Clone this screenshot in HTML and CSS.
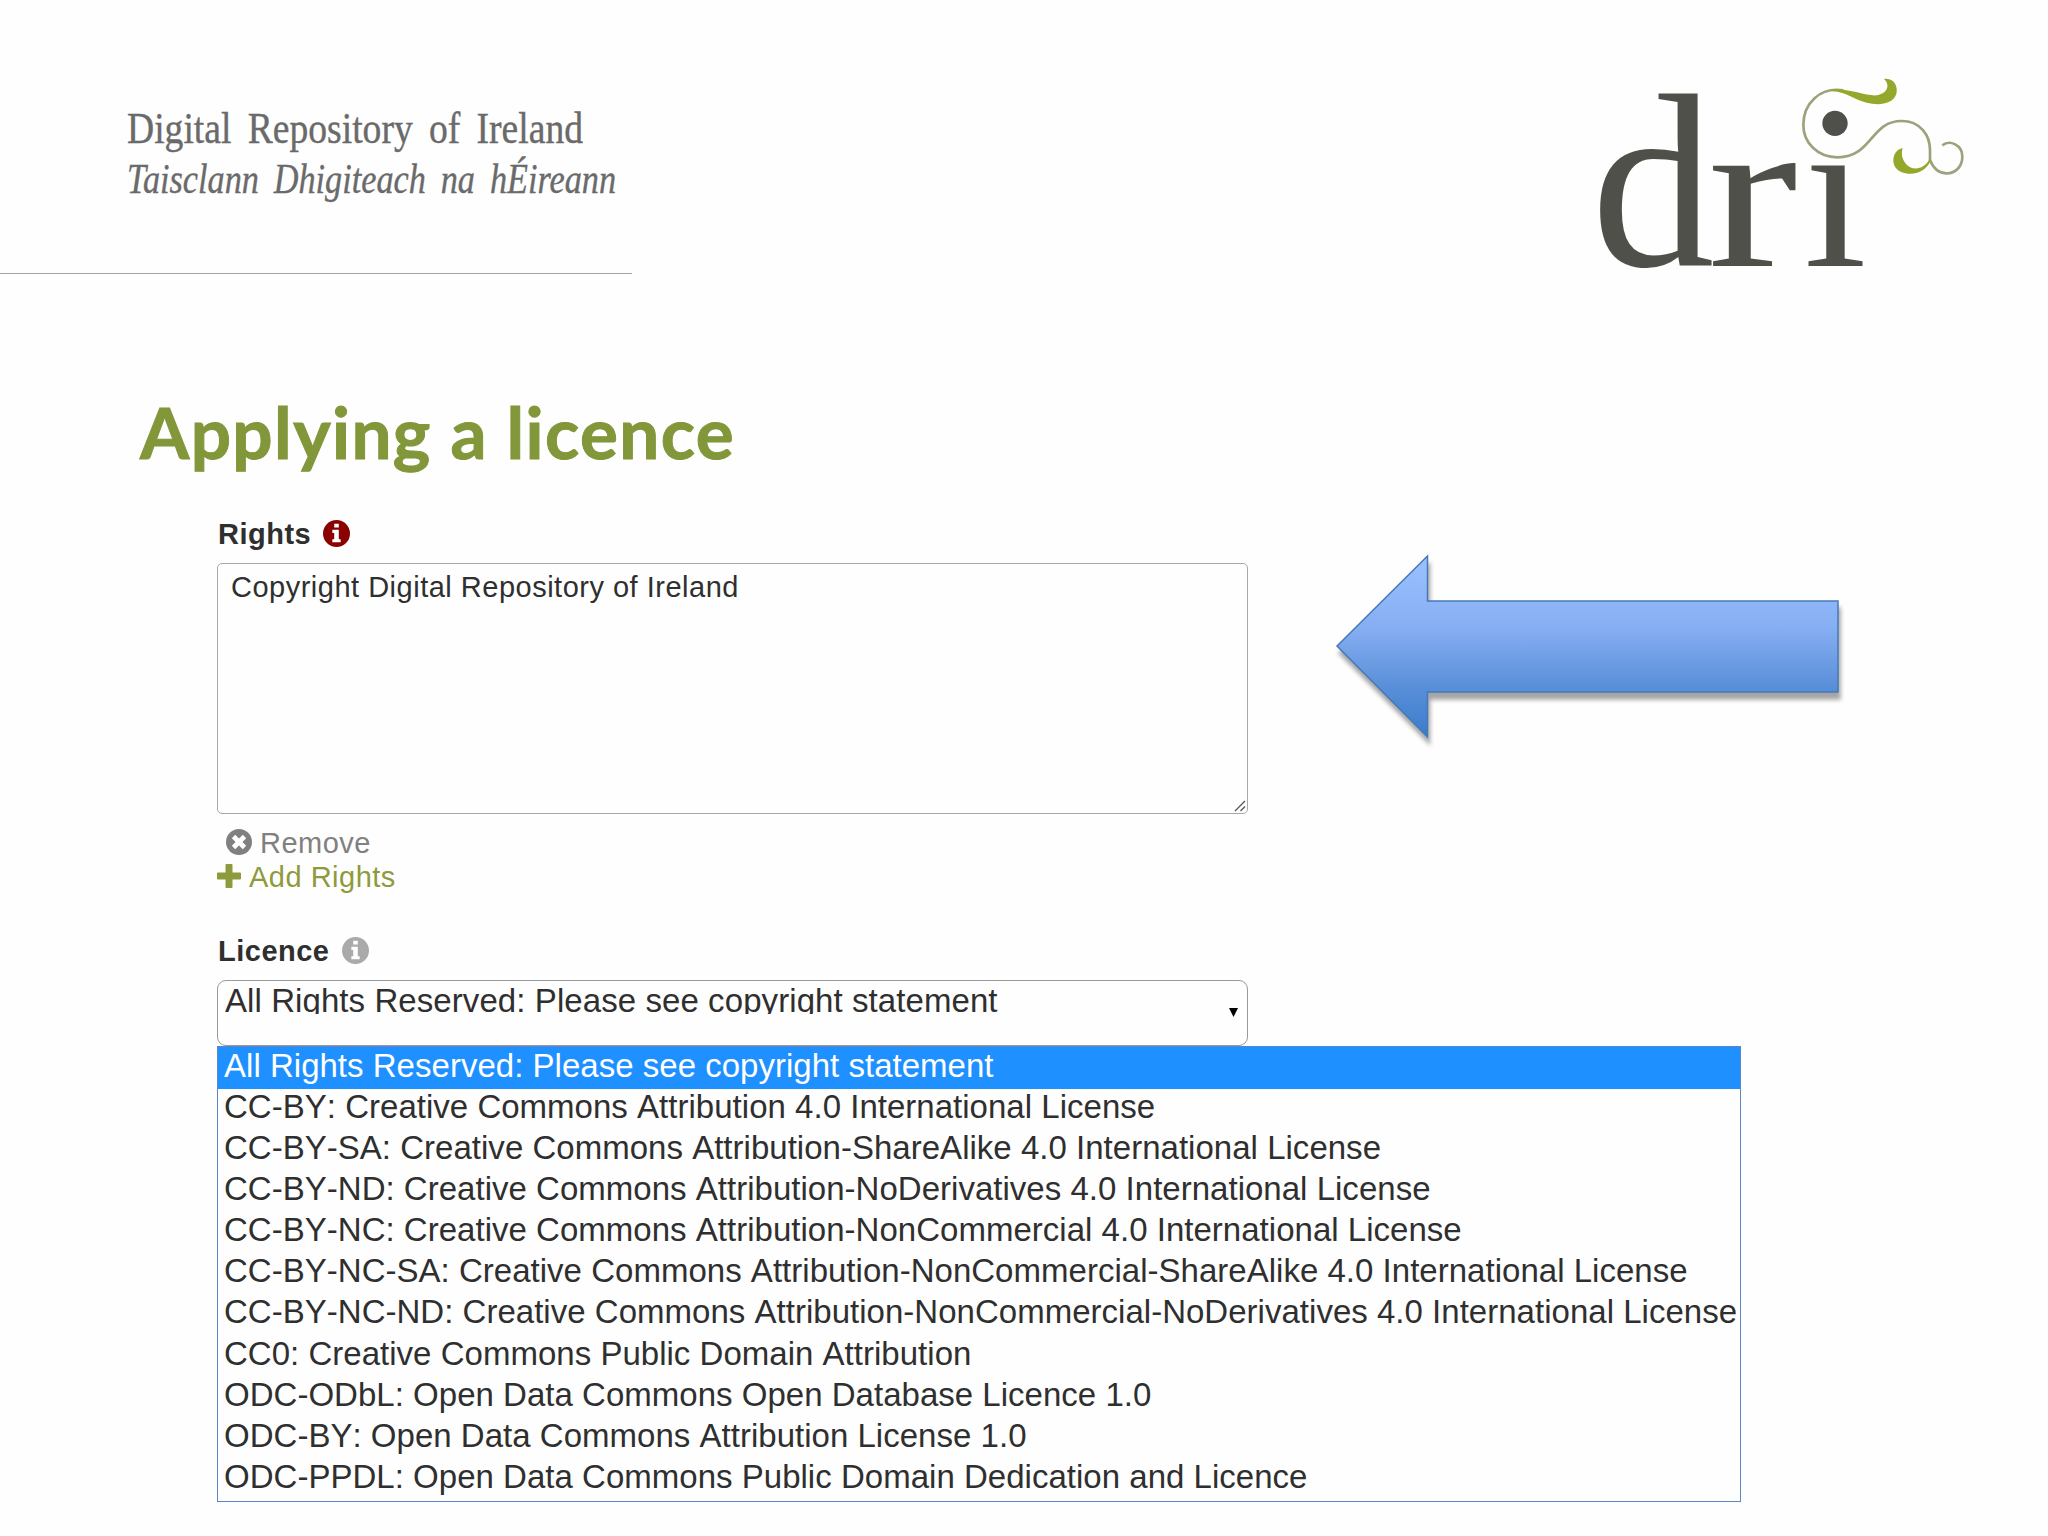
FILE: index.html
```html
<!DOCTYPE html>
<html lang="en">

<head>
    <meta charset="UTF-8">
    <meta name="viewport" content="width=device-width, initial-scale=1.0">
    <title>Applying a licence</title>
    <link rel="stylesheet" href="styles.css">
</head>

<body>
    <header class="header">
        <div class="brand">
            <svg class="brand-name" width="504" height="120" viewBox="0 0 504 120">
                <text x="0" y="47" textLength="456" lengthAdjust="spacingAndGlyphs">Digital Repository of Ireland</text>
                <text class="irish" x="0" y="97" textLength="489" lengthAdjust="spacingAndGlyphs">Taisclann Dhigiteach na hÉireann</text>
            </svg>
        </div>
        <svg class="logo" width="400" height="230" viewBox="0 0 1200 690">
            <g class="logo-text">
                <text transform="translate(34 618) scale(1.13 1.14)">d</text>
                <text transform="translate(383 618) scale(1.24 1)">r</text>
                <text transform="translate(671 618) scale(1.04 1)">ı</text>
            </g>
            <circle cx="765" cy="190" r="38" fill="#50504a" />
            <path class="vine" d="M790 91C720 80 670 130 670 195C670 250 715 292 772 292C880 290 870 183 965 183C1020 183 1050 225 1050 270V300C1060 325 1078 340 1100 340C1128 340 1147 318 1147 290C1147 255 1110 238 1087 256" />
            <path class="leaf" d="M755 88C815 85 865 112 895 105C925 98 930 72 912 57C942 52 955 80 949 102C938 134 895 137 860 128C820 118 805 98 755 93Z" />
            <path class="leaf" d="M1050 295C1030 335 992 330 978 312C966 297 963 282 968 264C943 268 933 300 945 320C962 348 1030 355 1053 300Z" />
        </svg>
    </header>

    <main class="content">
        <h1 class="title">Applying a licence</h1>

        <div class="columns">
            <form class="form">
                <div class="label">
                    <b>Rights</b>
                    <svg class="icon" width="27" height="27" viewBox="0 0 26 26">
                        <circle cx="13" cy="13" r="13" fill="#8b0000" />
                        <path fill="#fff" d="M10.8 3.5h4.4v3.8h-4.4zM9 9.5h6.2v9H17v3H9v-3h1.8v-6H9z" />
                    </svg>
                </div>
                <div class="textarea">
                    <span>Copyright Digital Repository of Ireland</span>
                    <svg class="grip" width="12" height="12" viewBox="0 0 12 12">
                        <path d="M1 11L11 1M6.5 11L11 6.5" stroke="#555" stroke-width="1.3" />
                    </svg>
                </div>
                <div class="action remove">
                    <svg width="26" height="26" viewBox="0 0 26 26">
                        <circle cx="13" cy="13" r="13" fill="#808080" />
                        <path d="M7.500 7.500l11 11M18.500 7.500l-11 11" stroke="#fff" stroke-width="4.8" />
                    </svg>
                    <span>Remove</span>
                </div>
                <div class="action add">
                    <svg width="24" height="24" viewBox="0 0 24 24">
                        <path fill="#8e9a3c" d="M8.500 1q0-1 1-1h5q1 0 1 1v7.500H23q1 0 1 1v5q0 1-1 1h-7.500V23q0 1-1 1h-5q-1 0-1-1v-7.500H1q-1 0-1-1v-5q0-1 1-1h7.500z" />
                    </svg>
                    <span>Add Rights</span>
                </div>
                <div class="label licence">
                    <b>Licence</b>
                    <svg class="icon" width="27" height="27" viewBox="0 0 26 26">
                        <circle cx="13" cy="13" r="13" fill="#aaa" />
                        <path fill="#fff" d="M10.8 3.5h4.4v3.8h-4.4zM9 9.5h6.2v9H17v3H9v-3h1.8v-6H9z" />
                    </svg>
                </div>
                <div class="select">
                    <div class="value">All Rights Reserved: Please see copyright statement</div>
                    <svg class="caret" width="9" height="9" viewBox="0 0 9 9">
                        <path d="M0 0h9L4.5 9z" />
                    </svg>
                </div>
                <ul class="options">
                    <li class="selected">All Rights Reserved: Please see copyright statement</li>
                    <li>CC-BY: Creative Commons Attribution 4.0 International License</li>
                    <li>CC-BY-SA: Creative Commons Attribution-ShareAlike 4.0 International License</li>
                    <li>CC-BY-ND: Creative Commons Attribution-NoDerivatives 4.0 International License</li>
                    <li>CC-BY-NC: Creative Commons Attribution-NonCommercial 4.0 International License</li>
                    <li>CC-BY-NC-SA: Creative Commons Attribution-NonCommercial-ShareAlike 4.0 International License</li>
                    <li>CC-BY-NC-ND: Creative Commons Attribution-NonCommercial-NoDerivatives 4.0 International License</li>
                    <li>CC0: Creative Commons Public Domain Attribution</li>
                    <li>ODC-ODbL: Open Data Commons Open Database Licence 1.0</li>
                    <li>ODC-BY: Open Data Commons Attribution License 1.0</li>
                    <li>ODC-PPDL: Open Data Commons Public Domain Dedication and Licence</li>
                </ul>
            </form>

            <svg class="arrow" width="520" height="200" viewBox="0 0 520 200">
                <defs>
                    <linearGradient id="blue" x1="0" y1="0" x2="0" y2="1">
                        <stop offset="0" stop-color="#9bc1ff" />
                        <stop offset="0.4" stop-color="#86aef2" />
                        <stop offset="0.72" stop-color="#5a8fd9" />
                        <stop offset="1" stop-color="#3a7ccb" />
                    </linearGradient>
                </defs>
                <path d="M7 96L97.5 6V51H508V142H97.5V187Z" fill="url(#blue)" stroke="#4579b8" stroke-width="1.5" />
            </svg>
        </div>
    </main>
</body>

</html>
```
FILE: styles.css
```css
* {
    box-sizing: border-box;
}

body {
    margin: 0;
    width: 2048px;
    height: 1536px;
    overflow: hidden;
    background: #fefefe;
    font-family: "Liberation Sans", Arial, sans-serif;
    color: #2f2f2f;
}

svg {
    overflow: visible;
}

.header {
    display: flex;
    justify-content: space-between;
    height: 290px;
    padding-right: 68px;
}

.brand {
    width: 632px;
    height: 274px;
    padding: 96px 0 0 127px;
    border-bottom: 1px solid #a3a3a3;
}

.brand-name {
    display: block;
    font-family: "Liberation Serif", serif;
    font-size: 44px;
    word-spacing: 8px;
    fill: #6a6a6a;
    stroke: #6a6a6a;
    stroke-width: 0.4px;
}

.irish {
    font-size: 43px;
    font-style: italic;
}

.logo {
    margin-top: 60px;
}

.logo-text {
    font-family: "Liberation Serif", serif;
    font-size: 655px;
    fill: #50504a;
}

.vine {
    fill: none;
    stroke: #9aa37c;
    stroke-width: 8px;
}

.leaf {
    fill: #94a82c;
}

.content {
    padding-left: 217px;
}

.title {
    height: 220px;
    margin: 0 0 0 -77px;
    padding-top: 100px;
    font-family: Lato, sans-serif;
    font-size: 71px;
    font-weight: bold;
    line-height: 84px;
    letter-spacing: 1.4px;
    -webkit-text-stroke: 1px #82963a;
    color: #82963a;
}

.columns {
    display: flex;
}

.form {
    width: 1524px;
    font-size: 29px;
    letter-spacing: 0.5px;
}

.label {
    display: flex;
    align-items: center;
    height: 46px;
    padding: 0 0 0 1px;
    line-height: 46px;
}

.label b,
.action span {
    padding-top: 2px;
}

.icon {
    margin-left: 12px;
}

.textarea {
    position: relative;
    width: 1031px;
    height: 251px;
    margin-top: 7px;
    padding: 6px 13px;
    border: 1px solid #a9a9a9;
    border-radius: 5px;
    line-height: 34px;
}

.grip {
    position: absolute;
    right: 1px;
    bottom: 1px;
}

.action {
    display: flex;
    align-items: center;
    height: 34px;
}

.remove {
    margin-top: 11px;
    padding-left: 9px;
    gap: 8px;
    color: #808080;
}

.add {
    gap: 8px;
    color: #8e9a3c;
}

.licence {
    margin-top: 34px;
}

.select {
    display: flex;
    justify-content: space-between;
    width: 1031px;
    height: 66px;
    margin-top: 7px;
    padding: 2px 9px 0 7px;
    border: 1px solid #999;
    border-radius: 9px;
    letter-spacing: 0.08px;
}

.value {
    height: 31px;
    overflow: hidden;
    font-size: 33px;
    line-height: 36px;
}

.caret {
    margin-top: 25px;
}

.options {
    height: 456px;
    margin: 0;
    padding: 0;
    border: 1px solid #5b86c8;
    list-style: none;
    font-size: 33px;
    font-kerning: none;
    letter-spacing: 0.02px;
}

.options li {
    height: 41.1px;
    padding-left: 6px;
    line-height: 36px;
    white-space: nowrap;
}

.options .selected {
    height: 42px;
    line-height: 37px;
    background: #1e90ff;
    color: #fff;
}

.arrow {
    flex: none;
    margin: 40px 0 0 -411px;
    filter: drop-shadow(2px 7px 2px rgba(0, 0, 0, 0.35));
}
```
